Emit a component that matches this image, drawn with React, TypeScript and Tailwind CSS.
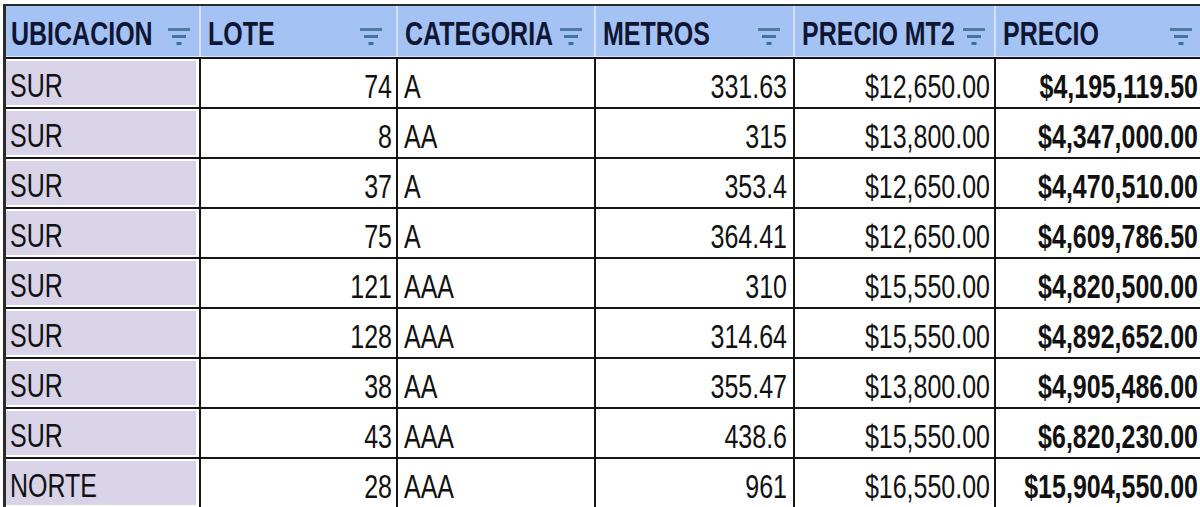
const rows = [
  ["SUR", "74", "A", "331.63", "$12,650.00", "$4,195,119.50"],
  ["SUR", "8", "AA", "315", "$13,800.00", "$4,347,000.00"],
  ["SUR", "37", "A", "353.4", "$12,650.00", "$4,470,510.00"],
  ["SUR", "75", "A", "364.41", "$12,650.00", "$4,609,786.50"],
  ["SUR", "121", "AAA", "310", "$15,550.00", "$4,820,500.00"],
  ["SUR", "128", "AAA", "314.64", "$15,550.00", "$4,892,652.00"],
  ["SUR", "38", "AA", "355.47", "$13,800.00", "$4,905,486.00"],
  ["SUR", "43", "AAA", "438.6", "$15,550.00", "$6,820,230.00"],
  ["NORTE", "28", "AAA", "961", "$16,550.00", "$15,904,550.00"]
]

const headers = [
  { label: "UBICACION", w: "w-[195px]", pr: "pr-[9px]" },
  { label: "LOTE", w: "w-[197px]", pr: "pr-[14px]" },
  { label: "CATEGORIA", w: "w-[198px]", pr: "pr-[12px]" },
  { label: "METROS", w: "w-[199px]", pr: "pr-[13px]" },
  { label: "PRECIO MT2", w: "w-[201px]", pr: "pr-[9px]" },
  { label: "PRECIO", w: "w-[204px]", pr: "pr-[8px]" }
]

const FilterIcon = () => (
  <svg width="22" height="18" viewBox="0 0 22 18" className="mt-[5px] shrink-0">
    <rect x="0" y="1" width="22" height="3" fill="#4f7aa3" />
    <rect x="4" y="8" width="14" height="3" fill="#3f75a3" />
    <rect x="8.5" y="15" width="5" height="3" fill="#3572a3" />
  </svg>
)

const Tall = ({ children, bold }: { children: string; bold?: boolean }) => (
  <span className={`inline-block origin-center scale-y-[1.34] leading-none ${bold ? "font-bold" : ""}`}>
    {children}
  </span>
)

export default function App() {
  return (
    <div className="h-[507px] w-[1200px] overflow-hidden bg-white pl-[3px] pt-[4px] font-['Liberation_Sans',Arial,sans-serif] text-[25px]">
      <div className="border-l-[3px] border-t-2 border-[#2b2b2b]">
        {/* header */}
        <div className="flex h-[53px] border-b-2 border-[#161616] bg-[#a4c2f4] text-[#0f1633]">
          {headers.map((h, i) => (
            <div
              key={h.label}
              className={`flex shrink-0 items-center justify-between border-b border-[#dbe7fa] pt-[4px] ${h.w} ${h.pr} ${
                i === 0 ? "pl-[5px]" : "pl-[7px]"
              } ${i < 5 ? "border-r-2 border-r-[#d3e2f8]" : ""}`}
            >
              <Tall bold>{h.label}</Tall>
              <FilterIcon />
            </div>
          ))}
        </div>

        {rows.map((r, idx) => (
          <div key={idx} className="flex h-[50px] border-b-2 border-[#161616] text-[#111111]">
            <div className="w-[195px] shrink-0 border-r-2 border-[#161616] bg-white py-[2px] pr-[3px]">
              <div className="flex h-full items-center bg-[#d9d3e8] pl-[4px] pt-[5px]">
                <Tall>{r[0]}</Tall>
              </div>
            </div>
            <div className="flex w-[197px] shrink-0 items-center justify-end border-r-2 border-[#161616] pr-[4px] pt-[6px]">
              <Tall>{r[1]}</Tall>
            </div>
            <div className="flex w-[198px] shrink-0 items-center border-r-2 border-[#161616] pl-[6px] pt-[6px]">
              <Tall>{r[2]}</Tall>
            </div>
            <div className="flex w-[199px] shrink-0 items-center justify-end border-r-2 border-[#161616] pr-[6px] pt-[6px]">
              <Tall>{r[3]}</Tall>
            </div>
            <div className="flex w-[201px] shrink-0 items-center justify-end border-r-2 border-[#161616] pr-[4px] pt-[6px]">
              <Tall>{r[4]}</Tall>
            </div>
            <div className="flex w-[204px] shrink-0 items-center justify-end pr-[2px] pt-[6px]">
              <Tall bold>{r[5]}</Tall>
            </div>
          </div>
        ))}
      </div>
    </div>
  )
}
